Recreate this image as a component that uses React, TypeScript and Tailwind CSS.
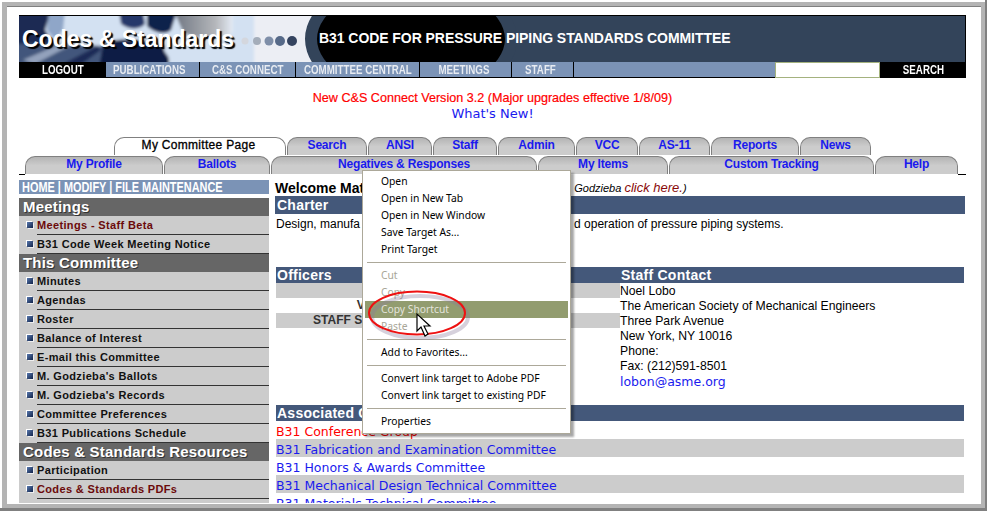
const sans = "font-['Liberation_Sans',Arial,sans-serif]";

const row1 = [
  { label: 'My Committee Page', w: 'w-[172px]', active: true },
  { label: 'Search', w: 'w-[80px]' },
  { label: 'ANSI', w: 'w-[64px]' },
  { label: 'Staff', w: 'w-[64px]' },
  { label: 'Admin', w: 'w-[77px]' },
  { label: 'VCC', w: 'w-[62px]' },
  { label: 'AS-11', w: 'w-[71px]' },
  { label: 'Reports', w: 'w-[88px]' },
  { label: 'News', w: 'w-[71px]' },
];

const row2 = [
  { label: 'My Profile', w: 'w-[138px]' },
  { label: 'Ballots', w: 'w-[106px]' },
  { label: 'Negatives & Responses', w: 'w-[266px]' },
  { label: 'My Items', w: 'w-[130px]' },
  { label: 'Custom Tracking', w: 'w-[205px]' },
  { label: 'Help', w: 'w-[83px]' },
];

const meetings = [
  { label: 'Meetings - Staff Beta', red: true },
  { label: 'B31 Code Week Meeting Notice' },
];

const committee = [
  { label: 'Minutes' },
  { label: 'Agendas' },
  { label: 'Roster' },
  { label: 'Balance of Interest' },
  { label: 'E-mail this Committee' },
  { label: "M. Godzieba's Ballots" },
  { label: "M. Godzieba's Records" },
  { label: 'Committee Preferences' },
  { label: 'B31 Publications Schedule' },
];

const resources = [
  { label: 'Participation' },
  { label: 'Codes & Standards PDFs', red: true },
];

const associated = [
  { label: 'B31 Conference Group', red: true },
  { label: 'B31 Fabrication and Examination Committee', grey: true },
  { label: 'B31 Honors & Awards Committee' },
  { label: 'B31 Mechanical Design Technical Committee', grey: true },
  { label: 'B31 Materials Technical Committee' },
];

const contact = [
  'Noel Lobo',
  'The American Society of Mechanical Engineers',
  'Three Park Avenue',
  'New York, NY 10016',
  'Phone:',
  'Fax: (212)591-8501',
];

// the site's nav labels are a condensed face, squeezed here from Liberation Sans
function Narrow({ children }: { children: string }) {
  return <span className="inline-block origin-center scale-x-[0.75] whitespace-nowrap">{children}</span>;
}

function NavCell({ w, label, className = '' }: { w: string; label: string; className?: string }) {
  return (
    <div className={`${w} flex justify-center overflow-hidden border-b border-black bg-[#7b93b6] ${className}`}>
      <Narrow>{label}</Narrow>
    </div>
  );
}

function Tab({ label, w, active }: { label: string; w: string; active?: boolean }) {
  return (
    <div
      className={`${w} flex h-[18px] shrink-0 items-center justify-center rounded-t-[10px] border border-b-0 border-[#808080] pb-[3px] text-[12px] font-bold leading-none ${
        active
          ? 'bg-white pr-[3px] font-normal tracking-[0.3px] text-black [-webkit-text-stroke:0.3px_black]'
          : 'bg-gradient-to-b from-[#b4b4b4] to-[#cccccc] to-50% tracking-[-0.2px] text-[#1a1aee]'
      }`}
    >
      {label}
    </div>
  );
}

function SideHeading({ children }: { children: string }) {
  return (
    <div className="h-[18px] bg-[#666666] pl-[4px] text-[15px] font-bold leading-[18px] tracking-[0.2px] text-white [text-shadow:1px_1px_0_#333]">
      {children}
    </div>
  );
}

function SideItem({ label, red }: { label: string; red?: boolean }) {
  return (
    <div className="flex h-[19px] bg-[#cccccc]">
      <div className="flex w-[18px] shrink-0 items-center pb-[1px] pl-[8px]">
        <div className="size-[6px] bg-gradient-to-br from-[#5a7ab0] to-[#12244a] shadow-[-1px_-1px_0_#fff,1px_1px_0_#eee]" />
      </div>
      <div
        className={`flex-1 border-b border-[#333333] text-[11px] font-bold leading-[18px] tracking-[0.35px] ${
          red ? 'text-[#6b0a0a]' : 'text-[#111111]'
        }`}
      >
        {label}
      </div>
    </div>
  );
}

function SectionBar({ children, className = '' }: { children: string; className?: string }) {
  return (
    <div className={`bg-[#44587a] text-[14px] font-bold tracking-[0.25px] text-white ${className}`}>
      {children}
    </div>
  );
}

function MenuItem({ label, off, hot }: { label: string; off?: boolean; hot?: boolean }) {
  return (
    <div
      className={`mx-[2px] h-[17px] pl-[16px] text-[10.3px] leading-[17px] ${
        hot ? 'bg-[#929c6f] text-[#e4e4dc]' : off ? 'text-[#a8a698]' : 'text-black'
      }`}
    >
      {label}
    </div>
  );
}

function MenuRule() {
  return <div className="mx-[4px] my-[4px] h-px bg-[#aca899]" />;
}

function ContextMenu() {
  return (
    <div className="absolute left-[355px] top-[163px] w-[209px] border border-[#aca899] bg-white pt-[2px] pb-[3px] shadow-[3px_3px_2px_rgba(0,0,0,0.35)] font-['Noto_Sans',sans-serif]">
      <MenuItem label="Open" />
      <MenuItem label="Open in New Tab" />
      <MenuItem label="Open in New Window" />
      <MenuItem label="Save Target As..." />
      <MenuItem label="Print Target" />
      <MenuRule />
      <MenuItem label="Cut" off />
      <MenuItem label="Copy" off />
      <MenuItem label="Copy Shortcut" hot />
      <MenuItem label="Paste" off />
      <MenuRule />
      <MenuItem label="Add to Favorites..." />
      <MenuRule />
      <MenuItem label="Convert link target to Adobe PDF" />
      <MenuItem label="Convert link target to existing PDF" />
      <MenuRule />
      <MenuItem label="Properties" />
    </div>
  );
}

function Callout() {
  return (
    <svg className="absolute left-[356px] top-[277px]" width="120" height="60" viewBox="0 0 120 60" fill="none">
      <ellipse cx="57" cy="33" rx="48" ry="21" stroke="#8a7a9a" strokeOpacity="0.35" strokeWidth="4" />
      <ellipse cx="54" cy="29" rx="48" ry="21.5" stroke="#ee1111" strokeWidth="2" />
      <path d="M54 30 V47 L58 43 L62 52 L65 50 L61 42 L67 42 Z" fill="#fff" stroke="#000" strokeWidth="1.2" strokeLinejoin="miter" />
    </svg>
  );
}

function BannerArt() {
  return (
    <svg className="absolute left-0 top-0" width="300" height="47" viewBox="0 0 300 47">
      <defs>
        <linearGradient id="fade" x1="0" x2="1">
          <stop offset="0" stopColor="#6f7682" />
          <stop offset="0.7" stopColor="#b4b6ba" />
          <stop offset="1" stopColor="#e4ebf5" />
        </linearGradient>
        <filter id="soft">
          <feGaussianBlur stdDeviation="1.6" />
        </filter>
      </defs>
      <rect width="300" height="47" fill="#eceef4" />
      <g filter="url(#soft)">
        <rect x="-5" y="-5" width="240" height="57" fill="#d3e1f2" />
        <path d="M-5 -5 H32 L26 14 L36 30 L-5 30 Z" fill="#1c2c52" />
        <path d="M30 -5 H46 L44 14 L36 24 L28 14 Z" fill="#8fa6c8" />
        <path d="M-5 28 H40 L86 30 L80 52 H-5 Z" fill="#43567c" />
        <path d="M4 44 L46 26 L52 29 L16 48 Z" fill="#93a2bc" />
        <path d="M44 48 L78 30 L82 34 L60 50 Z" fill="#1a2b56" />
        <path d="M84 28 C100 20 130 24 146 30 C142 36 150 38 150 44 L150 52 H80 Z" fill="#0b1a44" />
        <path d="M100 -5 H124 L126 8 C118 16 108 12 102 8 Z" fill="#26386a" />
        <path d="M128 -5 H158 L152 14 C146 20 134 16 128 10 Z" fill="#10204c" />
        <path d="M155 -5 H214 V16 C206 24 176 24 164 16 Z" fill="url(#fade)" />
      </g>
      <circle cx="226" cy="25" r="3.5" fill="#d4d7de" />
      <circle cx="238" cy="25" r="4" fill="#a4adba" />
      <circle cx="250" cy="25" r="4.5" fill="#7e8ea8" />
      <circle cx="261" cy="25" r="5" fill="#566988" />
      <circle cx="273" cy="25" r="5" fill="#34435f" />
    </svg>
  );
}

export default function App() {
  return (
    <div className={`h-[511px] w-[987px] overflow-hidden border-b-[3px] border-r-2 border-[#808080] bg-white pl-[2px] pt-[2px] ${sans}`}>
      <div className="h-[506px] w-[983px] border-b-4 border-l-[5px] border-r-4 border-t-4 border-[#b4b4b4]">
        <div className="relative h-[498px] w-[974px] overflow-hidden border-b border-t border-b-white border-t-[#808080] bg-white pl-[12px] pt-[8px]">
          {/* Banner */}
          <div className="w-[947px]">
            <div className="relative flex h-[47px] items-center overflow-hidden border-r border-t border-black bg-[#33445a]">
              <BannerArt />
              <div className="absolute left-[286px] top-[-42px] h-[130px] w-[212px] rounded-[50%] border-[12px] border-[#33445a] bg-black" />
              <div className="relative z-10 pl-[3px] text-[23px] font-bold leading-none text-white [text-shadow:2px_2px_1px_#000]">
                Codes &amp; Standards
              </div>
              <div className="absolute left-[300px] top-[15px] z-10 text-[14px] font-bold leading-none tracking-[-0.06px] text-white">
                B31 CODE FOR PRESSURE PIPING STANDARDS COMMITTEE
              </div>
            </div>

            {/* Nav */}
            <div className="flex h-[16px] gap-px bg-black text-center text-[13px] font-bold leading-[15px] text-[#e8ecf2]">
              <div className="-mr-px flex w-[87px] justify-center bg-black text-white">
                <Narrow>LOGOUT</Narrow>
              </div>
              <NavCell w="w-[93px]" label="PUBLICATIONS" className="pr-[6px]" />
              <NavCell w="w-[95px]" label="C&S CONNECT" />
              <NavCell w="w-[123px]" label="COMMITTEE CENTRAL" />
              <NavCell w="w-[91px]" label="MEETINGS" className="pr-[4px]" />
              <NavCell w="w-[61px]" label="STAFF" className="pr-[4px]" />
              <div className="w-[201px] border-b border-black bg-[#7b93b6]" />
              <div className="-ml-px w-[105px] border border-[#a4b27e] bg-white" />
              <div className="-ml-px flex w-[86px] justify-center bg-black text-white">
                <Narrow>SEARCH</Narrow>
              </div>
            </div>
          </div>

          {/* Notice */}
          <div className="w-[947px] pt-[13px] text-center">
            <div className="text-[12.6px] leading-[15px] text-[#ff0000] [-webkit-text-stroke:0.2px_#ff0000]">
              New C&amp;S Connect Version 3.2 (Major upgrades effective 1/8/09)
            </div>
            <div className="text-[13px] leading-[15px] text-[#1a1aee] font-['DejaVu_Sans',sans-serif]">
              What's New!
            </div>
          </div>

          {/* Tabs */}
          <div className="mt-[16px] flex h-[18px] gap-[1px] pl-[95px]">
            {row1.map((t) => (
              <Tab key={t.label} {...t} />
            ))}
          </div>
          <div className="mt-px flex h-[19px] w-[947px]">
            <div className="w-[6px] border-b border-black" />
            <div className="flex gap-[1px]">
              {row2.map((t) => (
                <Tab key={t.label} {...t} />
              ))}
            </div>
            <div className="flex-1 border-b border-black" />
          </div>

          {/* Body */}
          <div className="mt-[5px] flex w-[947px] gap-[6px]">
            <div className="w-[250px] shrink-0">
              <div className="mb-[4px] h-[14px] bg-[#7b93b6] text-[14px] font-bold leading-[14px] text-white">
                <span className="inline-block origin-left translate-x-[3px] scale-x-[0.78] whitespace-nowrap">
                  HOME | MODIFY | FILE MAINTENANCE
                </span>
              </div>
              <SideHeading>Meetings</SideHeading>
              {meetings.map((m) => (
                <SideItem key={m.label} {...m} />
              ))}
              <SideHeading>This Committee</SideHeading>
              {committee.map((m) => (
                <SideItem key={m.label} {...m} />
              ))}
              <SideHeading>Codes &amp; Standards Resources</SideHeading>
              {resources.map((m) => (
                <SideItem key={m.label} {...m} />
              ))}
              <div className="h-[19px] bg-[#cccccc]" />
            </div>

            <div className="-mt-[1px] w-[690px] shrink-0">
              <div className="flex h-[17px] items-center whitespace-nowrap text-[14px] font-bold leading-none text-black">
                <span>Welcome Mat</span>
                <span className="ml-[210px] text-[11px] font-normal italic">
                  Godzieba <span className="text-[13px] text-[#8a0a0a]">click here.</span>)
                </span>
              </div>
              <SectionBar className="h-[18px] pl-[2px] leading-[18px]">Charter</SectionBar>
              <div className="flex h-[53px] pl-[1px] pt-[3px] text-[12px] leading-[15px] text-black">
                <span>Design, manufa</span>
                <span className="ml-[214px]">d operation of pressure piping systems.</span>
              </div>

              <div className="ml-[1px] flex w-[688px]">
                <div className="w-[344px] shrink-0">
                  <SectionBar className="h-[16px] pl-[1px] leading-[16px]">Officers</SectionBar>
                  <div className="h-[15px] bg-[#cccccc] pr-[190px] text-right text-[12px] font-bold leading-[15px] text-[#333]">CHAIR:</div>
                  <div className="h-[15px] pr-[190px] text-right text-[12px] font-bold leading-[15px] text-[#333]">VICE CHAIR:</div>
                  <div className="h-[15px] bg-[#cccccc] pr-[190px] text-right text-[12px] font-bold leading-[15px] text-[#333]">STAFF SECRETARY:</div>
                </div>
                <div className="flex-1">
                  <SectionBar className="h-[16px] pl-[1px] leading-[16px]">Staff Contact</SectionBar>
                  <div className="pt-[1px] text-[12.2px] leading-[15px] text-black">
                    {contact.map((c) => (
                      <div key={c}>{c}</div>
                    ))}
                    <div className="text-[12.5px] text-[#1a1aee] font-['DejaVu_Sans',sans-serif]">lobon@asme.org</div>
                  </div>
                </div>
              </div>

              <SectionBar className="ml-[1px] mt-[16px] h-[16px] w-[688px] pl-[1px] leading-[16px]">Associated Committees</SectionBar>
              <div className="ml-[1px] w-[688px] text-[12.5px] leading-[21px] font-['DejaVu_Sans',sans-serif]">
                {associated.map((a) => (
                  <div key={a.label} className={`h-[18px] ${a.grey ? 'bg-[#cccccc]' : ''} ${a.red ? 'text-[#ff0000]' : 'text-[#1a1aee]'}`}>
                    {a.label}
                  </div>
                ))}
              </div>
            </div>
          </div>

          <ContextMenu />
          <Callout />
        </div>
      </div>
    </div>
  );
}
